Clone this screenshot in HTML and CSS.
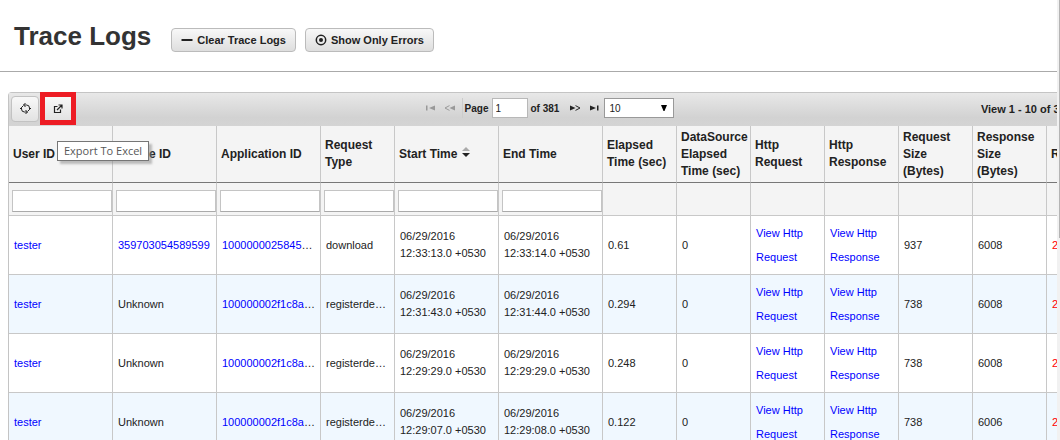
FILE: index.html
```html
<!DOCTYPE html>
<html lang="en">
<head>
<meta charset="utf-8">
<title>Trace Logs</title>
<link rel="stylesheet" href="styles.css">
</head>
<body>
<div class="app">
<main class="main">
  <header class="page-head">
    <h1 class="title">Trace Logs</h1>
    <div class="actions">
      <button class="btn" type="button"><svg width="12" height="12" viewBox="0 0 12 12" aria-hidden="true"><path d="M.5 5h11v2H.5z" fill="#222"/></svg>Clear Trace Logs</button>
      <button class="btn" type="button"><svg width="12" height="12" viewBox="0 0 12 12" aria-hidden="true"><circle cx="6" cy="6" r="4.7" fill="none" stroke="#222" stroke-width="1.5"/><circle cx="6" cy="6" r="2" fill="#222"/></svg>Show Only Errors</button>
    </div>
  </header>
  <section class="grid">
    <div class="toolbar">
      <div class="tools">
        <button class="tool" type="button" aria-label="Refresh"><svg width="11" height="11" viewBox="0 0 11 11" aria-hidden="true" fill="none" stroke="#222"><path d="M3.500 2h3Q9.500 2 9.500 5V6.500L8 8M5.500 0L3.500 2l2 2M7.500 9h-3Q1.500 9 1.500 6V4.500L3 3M5.500 7l2 2-2 2M0 6l1.500-1.500M11 5L9.500 6.500"/></svg></button>
        <button class="tool tool-marked" type="button" aria-label="Export To Excel"><svg width="10" height="10" viewBox="0 0 10 10" aria-hidden="true" fill="none" stroke="#222" stroke-width="1.2"><path d="M4.500 2.500H1.500v6h6V5.500M4 6L8.500 1.500M5.500 1h3.500v3.500"/></svg></button>
        <span class="tooltip" role="tooltip">Export To Excel</span>
      </div>
      <div class="pager">
        <button class="nav" type="button" disabled aria-label="First page"><svg width="10" height="6" viewBox="0 0 10 6"><path d="M0 .5h1.500v5H0zM9 .5v5L3 3z"/></svg></button>
        <button class="nav" type="button" disabled aria-label="Previous page"><svg width="12" height="6" viewBox="0 0 12 6"><path d="M11 .5v5L5.500 3z"/><path d="M5.500.6L1 3l4.500 2.400" fill="none" stroke="currentColor"/></svg></button>
        <label class="page-label">Page <input class="page-input" type="text" value="1"></label>
        <span class="page-total">of 381</span>
        <button class="nav" type="button" aria-label="Next page"><svg width="12" height="6" viewBox="0 0 12 6"><path d="M1 .5v5L6.500 3z"/><path d="M6.500.6L11 3 6.500 5.400" fill="none" stroke="currentColor"/></svg></button>
        <button class="nav" type="button" aria-label="Last page"><svg width="10" height="6" viewBox="0 0 10 6"><path d="M8 .5h1.500v5H8zM1 .5v5L7 3z"/></svg></button>
        <span class="size">
          <select class="size-select" aria-label="Rows per page"><option>10</option><option>20</option></select>
          <svg class="size-arrow" width="8" height="6" viewBox="0 0 8 6" aria-hidden="true"><path d="M1 0h6L4.500 6h-1z"/></svg>
        </span>
      </div>
      <div class="range">View 1 - 10 of 3,806</div>
    </div>
    <table class="table">
      <colgroup><col class="wide"><col class="wide"><col class="wide"><col class="narrow"><col class="wide"><col class="wide"><col class="narrow"><col class="narrow"><col class="narrow"><col class="narrow"><col class="narrow"><col class="narrow"><col class="last"></colgroup>
      <thead>
        <tr><th>User ID</th><th>Device ID</th><th>Application ID</th><th>Request Type</th><th>Start Time <svg class="sort" width="8" height="11" viewBox="0 0 8 11" aria-hidden="true"><path d="M0 4h8L4 0z" fill="#aaa"/><path d="M0 6h8l-4 4z" fill="#222"/></svg></th><th>End Time</th><th>Elapsed Time (sec)</th><th>DataSource Elapsed Time (sec)</th><th>Http Request</th><th>Http Response</th><th>Request Size (Bytes)</th><th>Response Size (Bytes)</th><th>Result</th></tr>
        <tr class="filters"><td><input class="filter" type="text" aria-label="Filter User ID"></td><td><input class="filter" type="text" aria-label="Filter Device ID"></td><td><input class="filter" type="text" aria-label="Filter Application ID"></td><td><input class="filter" type="text" aria-label="Filter Request Type"></td><td><input class="filter" type="text" aria-label="Filter Start Time"></td><td><input class="filter" type="text" aria-label="Filter End Time"></td><td></td><td></td><td></td><td></td><td></td><td></td><td></td></tr>
      </thead>
      <tbody>
        <tr><td><a href="#">tester</a></td><td><a href="#">359703054589599</a></td><td class="cut"><a href="#">1000000025845100</a></td><td class="cut">download</td><td>06/29/2016 12:33:13.0 +0530</td><td>06/29/2016 12:33:14.0 +0530</td><td>0.61</td><td>0</td><td class="view"><a href="#">View Http Request</a></td><td class="view"><a href="#">View Http Response</a></td><td>937</td><td>6008</td><td class="code">200</td></tr>
        <tr><td><a href="#">tester</a></td><td>Unknown</td><td class="cut"><a href="#">100000002f1c8a01</a></td><td class="cut">registerdevice</td><td>06/29/2016 12:31:43.0 +0530</td><td>06/29/2016 12:31:44.0 +0530</td><td>0.294</td><td>0</td><td class="view"><a href="#">View Http Request</a></td><td class="view"><a href="#">View Http Response</a></td><td>738</td><td>6008</td><td class="code">200</td></tr>
        <tr><td><a href="#">tester</a></td><td>Unknown</td><td class="cut"><a href="#">100000002f1c8a01</a></td><td class="cut">registerdevice</td><td>06/29/2016 12:29:29.0 +0530</td><td>06/29/2016 12:29:29.0 +0530</td><td>0.248</td><td>0</td><td class="view"><a href="#">View Http Request</a></td><td class="view"><a href="#">View Http Response</a></td><td>738</td><td>6008</td><td class="code">200</td></tr>
        <tr><td><a href="#">tester</a></td><td>Unknown</td><td class="cut"><a href="#">100000002f1c8a01</a></td><td class="cut">registerdevice</td><td>06/29/2016 12:29:07.0 +0530</td><td>06/29/2016 12:29:08.0 +0530</td><td>0.122</td><td>0</td><td class="view"><a href="#">View Http Request</a></td><td class="view"><a href="#">View Http Response</a></td><td>738</td><td>6006</td><td class="code">200</td></tr>
      </tbody>
    </table>
  </section>
</main>
<div class="scrollbar"><div class="thumb"></div></div>
</div>
</body>
</html>
```
FILE: styles.css
```css
* { box-sizing: border-box; }
body { margin: 0; background: #fff; color: #222; font: 12px/17px "Liberation Sans", Arial, sans-serif; }
button, input, select { font-family: inherit; color: inherit; }
a { color: #00f; text-decoration: none; }
.app { display: flex; height: 100vh; overflow: hidden; }
.main { flex: 1; min-width: 0; overflow: hidden; }
.scrollbar { width: 3px; padding-left: 2px; background: #f1f1f1; }
.thumb { height: 54%; background: #b4b4b4; }

.page-head { display: flex; align-items: center; gap: 20px; padding: 19px 14px; border-bottom: 1px solid #aaa; }
.title { margin: 0; font-size: 26px; line-height: 32px; color: #333; }
.actions { display: flex; gap: 9px; padding-top: 9px; }
.btn { display: flex; align-items: center; gap: 4px; height: 24px; padding: 0 9px; border: 1px solid #bbb; border-radius: 4px; background: linear-gradient(#f8f8f8, #dedede); font-size: 11px; font-weight: bold; white-space: nowrap; }

.grid { width: max-content; margin: 20px 0 0 8px; border: 1px solid #c4c4c4; border-width: 1px 0 0 1px; border-radius: 4px 0 0 0; }
.toolbar { display: grid; grid-template-columns: 1fr auto 1fr; align-items: center; height: 33px; background: linear-gradient(#e8e8e8, #d2d2d2 75%, #d4d4d4); }
.tools { position: relative; display: flex; align-items: center; gap: 6px; padding: 0 0 2px 2px; }
.tool { display: grid; place-items: center; width: 28px; height: 26px; padding: 0; border: 1px solid #c2c2c2; border-radius: 4px; background: linear-gradient(#f8f8f8, #e2e2e2); }
.tool-marked { width: 26px; height: 23px; border: 0; border-radius: 0; box-shadow: 0 0 0 5px #ed1c24; }
.tooltip { position: absolute; top: 45px; left: 48px; z-index: 2; padding: 0 6px; border: 1px solid #767676; background: #fff; box-shadow: 3px 3px 2px #8888; color: #575757; font: 11px/18px "Open Sans", "Noto Sans", sans-serif; white-space: nowrap; }
.pager { display: flex; align-items: center; font-size: 10px; font-weight: bold; padding: 0 4px 3px 0; }
.nav { display: flex; padding: 0 4px; border: 0; background: none; }
.nav svg { fill: currentColor; }
.nav:disabled { color: #999; }
.page-label { display: flex; align-items: center; gap: 3px; margin-left: 2px; padding-left: 2px; border-left: 1px solid #ccc; }
.page-input { width: 36px; height: 20px; padding: 0 3px; border: 1px solid #b8b8b8; font-size: 10px; }
.page-total { margin: 0 6px 0 3px; }
.size { position: relative; display: flex; margin-left: 1px; }
.size-select { appearance: none; width: 70px; height: 20px; padding: 0 4px; border: 1px solid #999; border-radius: 0; background: #fff; font-size: 10px; }
.size-arrow { position: absolute; right: 6px; top: 7px; pointer-events: none; }
.range { justify-self: end; padding: 0 10px 0 0; font-size: 11px; font-weight: bold; }

.table { table-layout: fixed; width: 1082px; border-spacing: 0; }
.wide { width: 104px; }
.narrow { width: 74px; }
.last { width: 44px; }
th, td { border-right: 1px solid #c8c8c8; border-bottom: 1px solid #c8c8c8; vertical-align: middle; text-align: left; overflow: hidden; }
th { height: 57px; padding: 2px 2px 2px 4px; border-bottom-color: #777; background: #f4f4f4; }
.sort { margin-left: 1px; vertical-align: 0; }
.filters td { height: 33px; padding: 7px 0 3px 3px; background: #f4f4f4; }
.filter { display: block; width: 100%; height: 22px; border: 1px solid #c4c4c4; border-bottom-color: #aaa; background: #fff; }
tbody td { height: 59px; padding: 0 4px 0 5px; font-size: 11px; }
tbody tr:nth-child(even) { background: #f0f8ff; }
.cut { white-space: nowrap; text-overflow: ellipsis; }
.view { line-height: 24px; }
.code { color: #f00; }
```
